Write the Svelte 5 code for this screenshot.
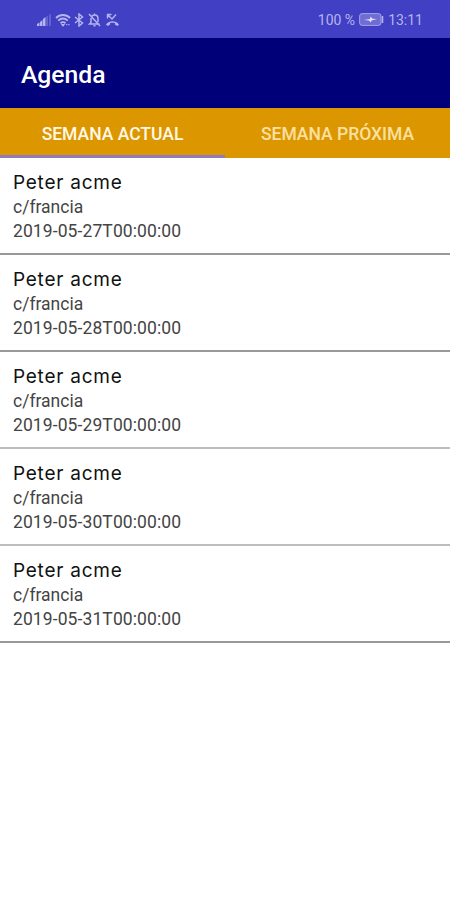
<script lang="ts">
	type Visit = {
		name: string;
		address: string;
		date: string;
	};

	const TABS = ['Semana actual', 'Semana próxima'];

	const days = [27, 28, 29, 30, 31];
	const thisWeek: Visit[] = days.map((day) => ({
		name: 'Peter acme',
		address: 'c/francia',
		date: `2019-05-${day}T00:00:00`
	}));

	let activeTab = $state(0);
	let visits = $derived(activeTab === 0 ? thisWeek : []);
</script>

<div class="screen">
	<div class="status-bar">
		<div class="status-icons">
			<svg class="signal" width="15" height="14" viewBox="0 0 15 14" fill="currentColor">
				<path d="M0 13v-2l2.500-1.500V13zM3 13V9l2.500-2v6zM6 13V6l2.500-2v9z" />
				<path d="M9 13V4l2-1.500V13zM12 13V2l2-1.500V13z" opacity="0.3" />
			</svg>
			<svg class="wifi" width="16" height="14" viewBox="0 0 16 14" fill="none" stroke="currentColor" stroke-width="1.8">
				<path d="M1 5c4-4 10-4 14 0M3.200 7.700c3-2.700 6.600-2.700 9.600 0M5.500 10.200c1.600-1.300 3.400-1.300 5 0" />
				<path d="M6.500 11.500h3L8 13.300zM11 11.700h1.500M13.200 11.700h1.500" fill="currentColor" stroke-width="1" />
			</svg>
			<svg class="bluetooth" width="10" height="14" viewBox="0 0 10 14" fill="none" stroke="currentColor" stroke-width="1.5">
				<path d="M1 4l7.500 6L5 13V1l3.500 3L1 10" />
			</svg>
			<svg class="muted" width="13" height="14" viewBox="0 0 13 14" fill="none" stroke="currentColor" stroke-width="1.5">
				<path d="M3 5v4.500L1.500 11h10M4 3.200C4.700 2.300 5.500 2 6.500 2 8.800 2 10 3.500 10 5.500V9M6.500 0.500V2M5.500 12.700h2M1 1l11 12" />
			</svg>
			<svg class="missed" width="15" height="14" viewBox="0 0 15 14" fill="none" stroke="currentColor" stroke-width="1.400">
				<path d="M2.500 5.500V1.500h4M2.500 1.500l4.500 4.500 4-4.500" />
				<path d="M1 11.500C4.500 7.300 10.500 7.300 14 11.500l-1.600 1.500-2.500-1.500V10c-1.600-.5-3.200-.5-4.800 0v1.500L2.600 13z" fill="currentColor" stroke="none" />
			</svg>
		</div>
		<div class="status-info">
			<span>100 %</span>
			<svg width="25" height="13" viewBox="0 0 25 13">
				<rect x="0.600" y="0.600" width="21.400" height="11.800" rx="2.500" fill="currentColor" fill-opacity="0.4" stroke="currentColor" stroke-opacity="0.8" />
				<path d="M23.500 3v7" stroke="currentColor" stroke-width="1.500" />
				<path d="M5 7l6-1 .5-2.500 2 2.200L18 6l-5.500 1.500-.7 2-1.800-2z" fill="#e4e3fb" />
			</svg>
			<span class="clock">13:11</span>
		</div>
	</div>

	<header class="app-bar">
		<h1>Agenda</h1>
	</header>

	<div class="tabs" role="tablist">
		{#each TABS as tab, i}
			<button
				type="button"
				class="tab"
				class:active={activeTab === i}
				role="tab"
				aria-selected={activeTab === i}
				onclick={() => (activeTab = i)}
			>
				{tab}
			</button>
		{/each}
	</div>

	<ul class="visits">
		{#each visits as visit}
			<li class="visit">
				<span class="name">{visit.name}</span>
				<span class="detail">{visit.address}</span>
				<span class="detail date">{visit.date}</span>
			</li>
		{/each}
	</ul>
</div>

<style>
	.screen {
		min-height: 900px;
		background-color: #fff;
		font-family: Roboto, 'Liberation Sans', sans-serif;
	}

	.status-bar {
		display: flex;
		align-items: center;
		justify-content: space-between;
		box-sizing: border-box;
		height: 38px;
		padding: 1px 27px 0 37px;
		background-color: #413fc3;
		color: #b5b4ee;
		font-size: 14px;
	}

	.status-icons,
	.status-info {
		display: flex;
		align-items: center;
	}

	.wifi {
		margin-left: 3px;
	}

	.bluetooth {
		margin-left: 3px;
	}

	.muted {
		margin-left: 4px;
	}

	.missed {
		margin-left: 4px;
	}

	.status-info {
		gap: 4px;
	}

	.app-bar {
		display: flex;
		align-items: center;
		box-sizing: border-box;
		height: 70px;
		padding: 2px 21px 0;
		background-color: #000078;
	}

	h1 {
		margin: 0;
		color: #fff;
		font-size: 24.7px;
		font-weight: 500;
	}

	.tabs {
		display: flex;
		height: 50px;
		background-color: #dc9600;
	}

	.tab {
		flex: 1;
		box-sizing: border-box;
		padding: 4px 0 0;
		border: none;
		border-bottom: 3px solid transparent;
		background-color: transparent;
		color: #fae0a0;
		font-family: inherit;
		font-size: 17.5px;
		font-weight: 500;
		text-transform: uppercase;
		cursor: pointer;
	}

	.tab.active {
		border-bottom-color: #8f7cc0;
		color: #fff8e6;
	}

	.visits {
		margin: 0;
		padding: 0;
		list-style: none;
	}

	.visit {
		display: flex;
		flex-direction: column;
		box-sizing: border-box;
		height: 97px;
		padding: 12px 13px 0;
		border-bottom: 2px solid #999;
	}

	.visit:nth-child(3),
	.visit:nth-child(4) {
		border-bottom-color: #bdbdbd;
	}

	.name {
		color: #111;
		font-family: Inter, sans-serif;
		font-size: 19px;
		font-weight: 400;
		line-height: 26px;
		letter-spacing: 0.75px;
	}

	.detail {
		color: #444;
		font-size: 17.5px;
		line-height: 24px;
	}

	.name + .detail {
		margin-top: -1px;
	}

	.date {
		letter-spacing: 0.1px;
	}
</style>
